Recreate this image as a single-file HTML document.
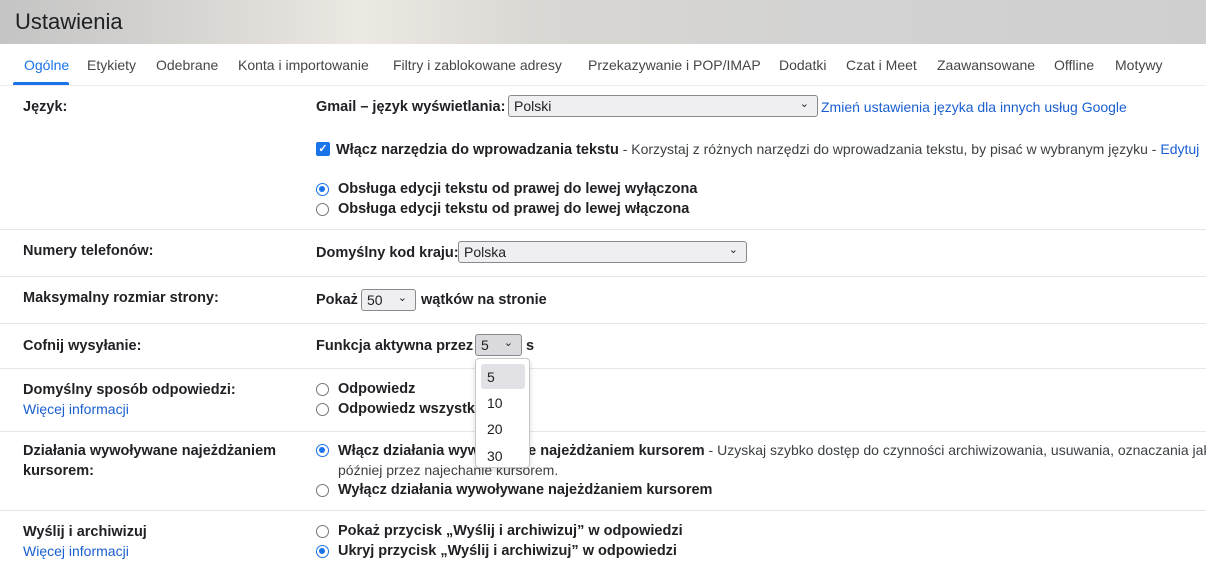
<!DOCTYPE html>
<html><head><meta charset="utf-8"><style>
*{margin:0;padding:0;box-sizing:border-box}
body{width:1206px;height:567px;overflow:hidden;background:#fff;font-family:"Liberation Sans",sans-serif;font-size:14px;color:#202124;position:relative}
.hdr{position:absolute;left:0;top:0;width:1206px;height:44px;background:linear-gradient(90deg,#c4c4c4 0%,#d6d4d1 15%,#ece8e2 30%,#d9d7d3 45%,#d2d2d2 70%,#cfcfcf 100%)}
.hdr span{position:absolute;left:15px;top:9px;font-size:22px;color:#202124}
.a{position:absolute;white-space:nowrap}
.b{font-weight:bold;font-size:14.5px}
.tab{position:absolute;top:57px;color:#444746;font-size:14px}
.line{position:absolute;left:0;width:1206px;height:1px;background:#e6e6e6}
.sel{position:absolute;border:1px solid #8a8a8a;border-radius:3px;background:#efeff2;height:22px;font-size:14px;padding:2px 5px}
.sel i{position:absolute;right:8px;top:1px;font-style:normal;font-size:11px}
.rad{position:absolute;width:13px;height:13px;border-radius:50%;border:1.5px solid #767676;background:#fff}
.rad.on{border:1.5px solid #1a73e8}
.rad.on::after{content:"";position:absolute;left:2px;top:2px;width:6px;height:6px;border-radius:50%;background:#1a73e8}
.lnk{color:#1a5fd1}
.g{color:#3c4043}
</style></head><body>
<div class="hdr"><span>Ustawienia</span></div>
<div class="tab" style="left:24px;color:#1a73e8">Ogólne</div>
<div style="position:absolute;left:13px;top:82px;width:56px;height:3px;background:#1a73e8;border-radius:2px 2px 0 0"></div>
<div class="tab" style="left:87px">Etykiety</div>
<div class="tab" style="left:156px">Odebrane</div>
<div class="tab" style="left:238px">Konta i importowanie</div>
<div class="tab" style="left:393px">Filtry i zablokowane adresy</div>
<div class="tab" style="left:588px">Przekazywanie i POP/IMAP</div>
<div class="tab" style="left:779px">Dodatki</div>
<div class="tab" style="left:846px">Czat i Meet</div>
<div class="tab" style="left:937px">Zaawansowane</div>
<div class="tab" style="left:1054px">Offline</div>
<div class="tab" style="left:1115px">Motywy</div>
<div class="line" style="top:85px;background:#ececec"></div>

<div class="a b" style="left:23px;top:99px">Język:</div>
<div class="a b" style="left:316px;top:99px">Gmail – język wyświetlania:</div>
<div class="sel" style="left:508px;top:95px;width:310px">Polski<i>⌄</i></div>
<div class="a lnk" style="left:821px;top:99px">Zmień ustawienia języka dla innych usług Google</div>
<div style="position:absolute;left:316px;top:142px;width:14px;height:14px;border-radius:2px;background:#1a73e8;color:#fff;font-size:11px;line-height:14px;text-align:center;font-weight:bold">✓</div>
<div class="a" style="left:336px;top:141px"><b class="b">Włącz narzędzia do wprowadzania tekstu</b> <span class="g">- Korzystaj z różnych narzędzi do wprowadzania tekstu, by pisać w wybranym języku - </span><span class="lnk">Edytuj</span></div>
<div class="rad on" style="left:316px;top:183px"></div>
<div class="a b" style="left:338px;top:181px">Obsługa edycji tekstu od prawej do lewej wyłączona</div>
<div class="rad" style="left:316px;top:203px"></div>
<div class="a b" style="left:338px;top:201px">Obsługa edycji tekstu od prawej do lewej włączona</div>
<div class="line" style="top:229px"></div>

<div class="a b" style="left:23px;top:243px">Numery telefonów:</div>
<div class="a b" style="left:316px;top:245px">Domyślny kod kraju:</div>
<div class="sel" style="left:458px;top:241px;width:289px">Polska<i>⌄</i></div>
<div class="line" style="top:276px"></div>

<div class="a b" style="left:23px;top:290px">Maksymalny rozmiar strony:</div>
<div class="a b" style="left:316px;top:292px">Pokaż</div>
<div class="sel" style="left:361px;top:289px;width:55px">50<i>⌄</i></div>
<div class="a b" style="left:421px;top:292px">wątków na stronie</div>
<div class="line" style="top:323px"></div>

<div class="a b" style="left:23px;top:338px">Cofnij wysyłanie:</div>
<div class="a b" style="left:316px;top:338px">Funkcja aktywna przez</div>
<div class="sel" style="left:475px;top:334px;width:47px;background:#d9d9de">5<i>⌄</i></div>
<div class="a b" style="left:526px;top:338px">s</div>
<div class="line" style="top:368px"></div>

<div class="a b" style="left:23px;top:382px">Domyślny sposób odpowiedzi:</div>
<div class="a lnk" style="left:23px;top:401px">Więcej informacji</div>
<div class="rad" style="left:316px;top:383px"></div>
<div class="a b" style="left:338px;top:381px">Odpowiedz</div>
<div class="rad" style="left:316px;top:403px"></div>
<div class="a b" style="left:338px;top:401px">Odpowiedz wszystkim</div>
<div class="line" style="top:431px"></div>

<div class="a b" style="left:23px;top:443px">Działania wywoływane najeżdżaniem</div>
<div class="a b" style="left:23px;top:463px">kursorem:</div>
<div class="rad on" style="left:316px;top:444px"></div>
<div class="a" style="left:338px;top:442px"><b class="b">Włącz działania wywoływane najeżdżaniem kursorem</b> <span class="g">- Uzyskaj szybko dostęp do czynności archiwizowania, usuwania, oznaczania jako</span></div>
<div class="a g" style="left:338px;top:462px">później przez najechanie kursorem.</div>
<div class="rad" style="left:316px;top:484px"></div>
<div class="a b" style="left:338px;top:482px">Wyłącz działania wywoływane najeżdżaniem kursorem</div>
<div class="line" style="top:510px"></div>

<div class="a b" style="left:23px;top:524px">Wyślij i archiwizuj</div>
<div class="a lnk" style="left:23px;top:543px">Więcej informacji</div>
<div class="rad" style="left:316px;top:525px"></div>
<div class="a b" style="left:338px;top:523px">Pokaż przycisk „Wyślij i archiwizuj” w odpowiedzi</div>
<div class="rad on" style="left:316px;top:545px"></div>
<div class="a b" style="left:338px;top:543px">Ukryj przycisk „Wyślij i archiwizuj” w odpowiedzi</div>

<div style="position:absolute;left:475px;top:358px;width:55px;height:110px;background:#fff;border:1px solid #c8c8c8;border-radius:4px;box-shadow:0 2px 6px rgba(0,0,0,.15)">
<div style="position:absolute;left:5px;top:5px;width:44px;height:25px;background:#e2e2e6;border-radius:3px"></div>
<div class="a" style="left:11px;top:10px">5</div>
<div class="a" style="left:11px;top:36px">10</div>
<div class="a" style="left:11px;top:62px">20</div>
<div class="a" style="left:11px;top:89px">30</div>
</div>
</body></html>
